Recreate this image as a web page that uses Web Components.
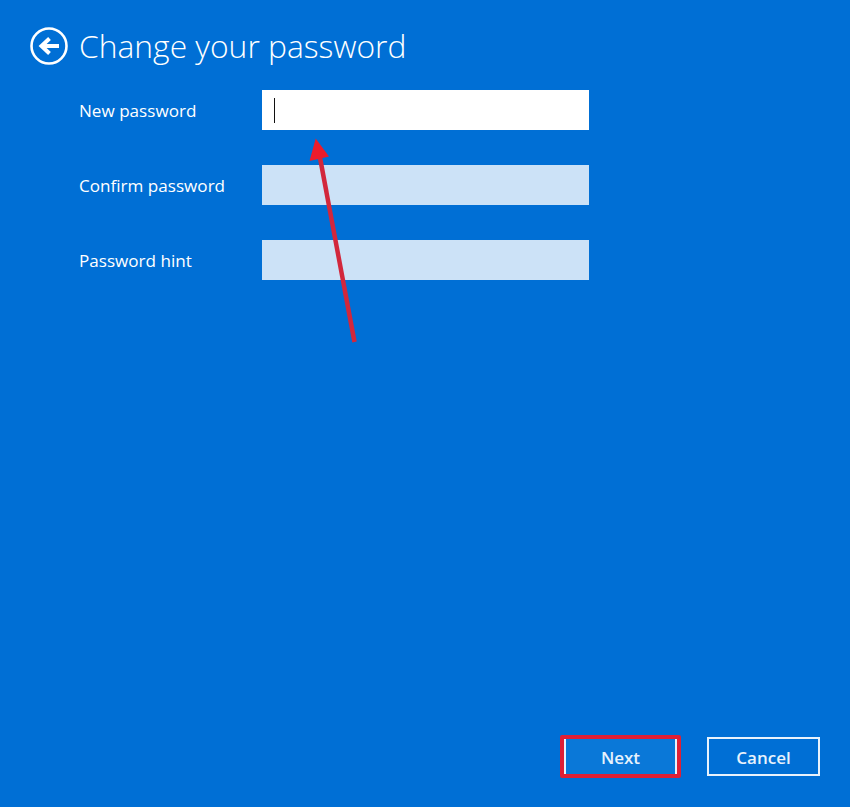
<!DOCTYPE html>
<html>
<head>
<meta charset="utf-8">
<title>Change your password</title>
<style>
  html, body { margin: 0; height: 100%; }
  body { background: #006fd5; font-family: "Open Sans", "Noto Sans", sans-serif; }
</style>
</head>
<body>
<pw-page>
  <pw-header slot="header">Change your password</pw-header>
  <pw-field slot="fields" active>New password</pw-field>
  <pw-field slot="fields">Confirm password</pw-field>
  <pw-field slot="fields">Password hint</pw-field>
  <pw-button slot="buttons" marked>Next</pw-button>
  <pw-button slot="buttons">Cancel</pw-button>
</pw-page>
<script>
class PwPage extends HTMLElement {
  constructor() {
    super()
    this.attachShadow({ mode: 'open' })
    this.shadowRoot.innerHTML = `
      <style>
        :host {
          display: flex;
          flex-direction: column;
          position: relative;
          width: 850px;
          height: 807px;
          box-sizing: border-box;
          padding: 27px 30px 29px 30px;
          overflow: hidden;
          color: #fff;
        }
        .fields {
          display: flex;
          flex-direction: column;
          gap: 35px;
          margin-top: 25px;
          margin-left: 49px;
        }
        .buttons {
          display: flex;
          justify-content: flex-end;
          align-items: center;
          gap: 26px;
          margin-top: auto;
        }
        svg {
          position: absolute;
          left: 0;
          top: 0;
          pointer-events: none;
        }
      </style>
      <slot name="header"></slot>
      <div class="fields"><slot name="fields"></slot></div>
      <div class="buttons"><slot name="buttons"></slot></div>
      <svg width="850" height="807" viewBox="0 0 850 807">
        <path d="M354.500 342 L319.500 155" stroke="#d2273c" stroke-width="4.500" fill="none"/>
        <path d="M315.700 138.500 L309.500 161 L329 156.500 Z" fill="#ec1c2b"/>
      </svg>
    `
  }
}
customElements.define('pw-page', PwPage)

class PwHeader extends HTMLElement {
  constructor() {
    super()
    this.attachShadow({ mode: 'open' })
    this.shadowRoot.innerHTML = `
      <style>
        :host {
          display: flex;
          align-items: center;
          gap: 11px;
          height: 38px;
        }
        svg { flex: none; }
        span {
          font-size: 31.800px;
          font-weight: 300;
          line-height: 38px;
          white-space: nowrap;
        }
      </style>
      <svg width="38" height="38" viewBox="0 0 38 38">
        <circle cx="19" cy="19" r="17.500" fill="none" stroke="#fff" stroke-width="2.600"/>
        <path d="M29 19 H13 M19.500 11.500 L11.500 19 L19.500 26.500" fill="none" stroke="#fff" stroke-width="4"/>
      </svg>
      <span><slot></slot></span>
    `
  }
}
customElements.define('pw-header', PwHeader)

class PwField extends HTMLElement {
  constructor() {
    super()
    this.attachShadow({ mode: 'open' })
    this.shadowRoot.innerHTML = `
      <style>
        :host {
          display: flex;
          align-items: center;
          height: 40px;
          font-size: 17.100px;
        }
        label { width: 183px; flex: none; white-space: nowrap; }
        .box {
          width: 327px;
          height: 40px;
          background: #cce2f7;
          box-sizing: border-box;
          padding: 8px 12px;
        }
        :host([active]) .box { background: #fff; }
        .caret { display: none; width: 1px; height: 25px; background: #111; }
        :host([active]) .caret { display: block; }
      </style>
      <label><slot></slot></label>
      <div class="box"><div class="caret"></div></div>
    `
  }
}
customElements.define('pw-field', PwField)

class PwButton extends HTMLElement {
  constructor() {
    super()
    this.attachShadow({ mode: 'open' })
    this.shadowRoot.innerHTML = `
      <style>
        :host {
          display: flex;
          align-items: center;
          justify-content: center;
          box-sizing: border-box;
          width: 113px;
          height: 39px;
          padding-top: 1px;
          border: 2px solid #e8f2fc;
          font-size: 17px;
          font-weight: 600;
          color: #e8f2fc;
        }
        :host([marked]) {
          width: 121px;
          height: 43px;
          border: 4px solid #e01f35;
          border-radius: 2px;
          background: #0a78d8;
          box-shadow: inset 2px 0 0 #e8f2fc, inset -2px 0 0 #e8f2fc;
        }
      </style>
      <slot></slot>
    `
  }
}
customElements.define('pw-button', PwButton)
</script>
</body>
</html>
